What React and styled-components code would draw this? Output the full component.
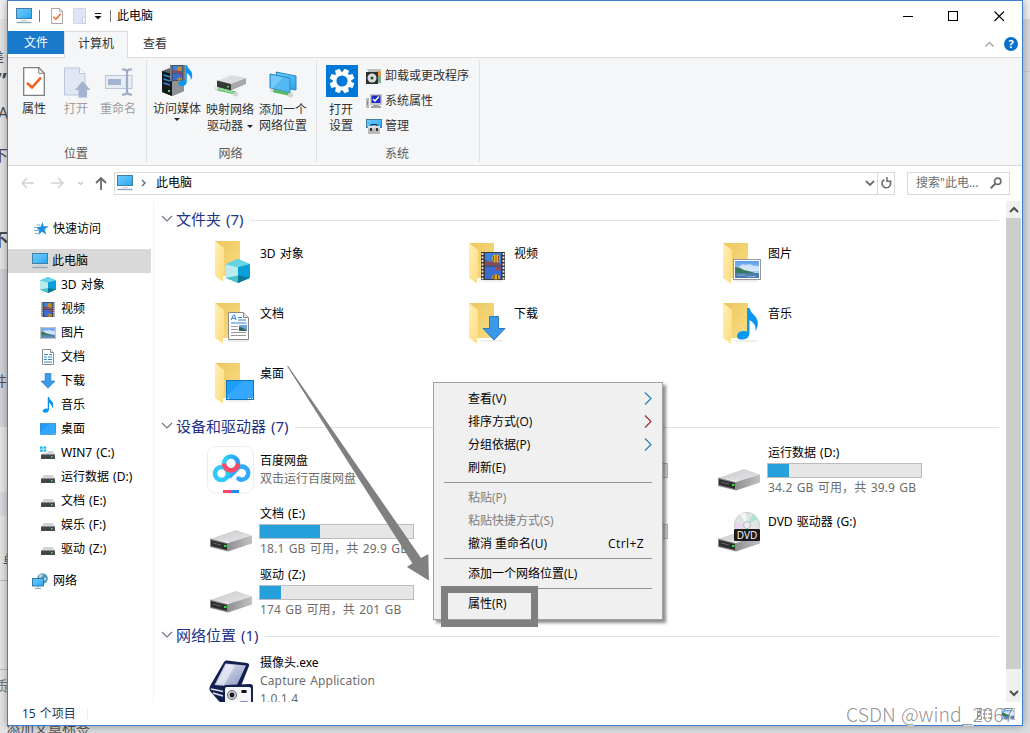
import React from 'react';
import styled, { createGlobalStyle, css } from 'styled-components';

const GlobalStyle = createGlobalStyle`
    * {
        box-sizing: border-box;
    }

    body {
        margin: 0;
        overflow: hidden;
        background: #e2e3e5;
        color: #000;
        font: 12px/16px "Noto Sans", "Noto Sans CJK SC", sans-serif;
        word-spacing: 1px;
    }

    svg {
        display: block;
        flex: none;
    }
`;

/* ---------- icons ---------- */

const Gradients = () => (
    <HiddenSvg width="0" height="0">
        <defs>
            <linearGradient id="screen" x1="0" y1="0" x2="1" y2="1">
                <stop offset="0" stopColor="#6cc9fb" />
                <stop offset=".5" stopColor="#4fbcf8" />
                <stop offset="1" stopColor="#27a3f2" />
            </linearGradient>
            <linearGradient id="folderBack" x1="0" y1="0" x2="1" y2="1">
                <stop offset="0" stopColor="#ecc75f" />
                <stop offset="1" stopColor="#f9dc83" />
            </linearGradient>
            <linearGradient id="folderFront" x1="0" y1="0" x2="1" y2="1">
                <stop offset="0" stopColor="#fff0b4" />
                <stop offset="1" stopColor="#fddb7e" />
            </linearGradient>
            <linearGradient id="driveTop" x1="0" y1="0" x2="1" y2="1">
                <stop offset="0" stopColor="#c9cacb" />
                <stop offset="1" stopColor="#e6e6e8" />
            </linearGradient>
            <linearGradient id="driveSide" x1="0" y1="0" x2="1" y2="0">
                <stop offset="0" stopColor="#8f9092" />
                <stop offset="1" stopColor="#c0c1c3" />
            </linearGradient>
            <linearGradient id="sky" x1="0" y1="0" x2="0" y2="1">
                <stop offset="0" stopColor="#5b9bea" />
                <stop offset="1" stopColor="#d6ebfa" />
            </linearGradient>
            <linearGradient id="pan" x1="0" y1="0" x2="1" y2="0">
                <stop offset="0" stopColor="#2fd2f8" />
                <stop offset="1" stopColor="#2a9cff" />
            </linearGradient>
            <linearGradient id="tablet" x1="0" y1="0" x2="1" y2="1">
                <stop offset="0" stopColor="#e9edf8" />
                <stop offset="1" stopColor="#8894bd" />
            </linearGradient>
        </defs>
    </HiddenSvg>
);

const ComputerIcon = () => (
    <svg width="17" height="16" viewBox="0 0 17 16">
        <rect x=".5" y=".5" width="15" height="10" fill="url(#screen)" stroke="#3f7fa6" />
        <path d="M5 12.500h6" stroke="#c4cdd4" />
        <path d="M.500 14.500h15" stroke="#8aa5bb" strokeWidth="1.400" />
    </svg>
);

const CubeShape = () => (
    <g>
        <path d="M0 3.500L8 0l8 3.500v9L8 16l-8-3.500z" fill="#16a8cf" />
        <path d="M0 3.500L8 0l8 3.500L8 5.500z" fill="#64d5e3" />
        <path d="M0 3.500l8 2v7.500l-8-.500z" fill="#b9ecee" />
        <path d="M8 5.500l8-2v9L8 13z" fill="#0a9fd8" />
        <path d="M0 12.500L8 11v5z" fill="#4cc3c8" />
        <path d="M8 11l8 1.500L8 16z" fill="#087997" />
    </g>
);

const FilmShape = () => (
    <g>
        <rect width="24" height="28" fill="#3b3b3b" />
        <path d="M1.500 1v27M22.500 1v27" stroke="#e8e8e8" strokeWidth="1.800" strokeDasharray="2 1.500" />
        <rect x="4" y="1" width="16" height="12.500" fill="#3f7fe0" />
        <rect x="4" y="14.500" width="16" height="12.500" fill="#3a6cd0" />
        <path d="M4 8l5 2 4-1 7 3v1.500H4z" fill="#8a4a55" />
        <ellipse cx="15" cy="6.500" rx="3.800" ry="4" fill="#e3b824" />
        <path d="M15 2.500v8M12.500 4v5M17.500 4v5" stroke="#8a2d17" strokeWidth=".8" />
        <path d="M14 15.500h6l-2 3h-2z" fill="#c0392b" />
        <ellipse cx="15" cy="25" rx="4" ry="2.500" fill="#e2a91c" />
        <path d="M13 23v4M16.500 23v4" stroke="#53311d" />
    </g>
);

const PhotoShape = () => (
    <g>
        <rect x=".5" y=".5" width="27" height="20" fill="#fff" stroke="#989898" />
        <rect x="2" y="2" width="24" height="17" fill="url(#sky)" />
        <path d="M6 8q3-4 7-2 4-2 8 1 4-1 5 1v4H4z" fill="#eef7fd" opacity=".7" />
        <path d="M2 8q5 0 9 3 5 1 11 3H2z" fill="#3a7a5c" />
        <path d="M2 14h24v5H2z" fill="#4b7dab" />
        <path d="M4 16h9M14 17.500h9" stroke="#a6c6df" strokeWidth=".7" />
    </g>
);

const NoteShape = () => (
    <path d="M11 0h2.500q1 4 4.500 7 5 4.500 3.500 11-.3 3-2 5 1-7-6-11v13q-.5 6-7 6.500Q1 32 1 28q.4-5 7-5 1.600 0 3 .6z" fill="#0898ef" />
);

const DownShape = () => (
    <path d="M7.500.5h9v12h6.500L12 24 1 12.500h6.500z" fill="#3c98e8" stroke="#2a7ac3" />
);

const DocShape = () => (
    <g>
        <path d="M.5.5h15l5 5v22H.5z" fill="#fff" stroke="#888" />
        <path d="M15.500.5v5h5" fill="#e6e6e6" stroke="#888" />
        <path d="M3 8l2.500-5h1L8 8M4 6.300h4" fill="none" stroke="#2184cf" />
        <path d="M10 5.500h4M10 8h8M3 11h15.500" stroke="#2b88cf" strokeWidth="1.100" />
        <path d="M3 14.500h7M3 17.500h7M3 20.500h15M3 23.500h15" stroke="#9b9b9b" />
        <rect x="11" y="13" width="8" height="6" fill="#6ea7dc" />
        <path d="M11 15q4 0 8 4h-8z" fill="#35635d" />
    </g>
);

const SmallDocShape = () => (
    <g>
        <path d="M.5.5h8l3 3v12H.5z" fill="#fff" stroke="#8c8c8c" />
        <path d="M8.500.5v3h3" fill="#eee" stroke="#8c8c8c" />
        <path d="M2 5.500h4M7 5.500h3M2 8h3M6 8h4M2 10.500h3M6 10.500h4M2 13h8" stroke="#2b88cf" />
    </g>
);

const DesktopShape = () => (
    <g>
        <rect x=".5" y=".5" width="27" height="19" fill="#1e9dfb" stroke="#0e76be" />
        <path d="M1 15L17 1h10v18H1z" fill="#45b1ff" opacity=".5" />
        <path d="M2 18.500h1M22 18.500h1M24 18.500h1M26 18.500h1" stroke="#fff" />
    </g>
);

const shapes = {
    cube: { Shape: CubeShape, w: 16, h: 16, small: [16, 16], big: [24, 24, 11, 18] },
    film: { Shape: FilmShape, w: 24, h: 28, small: [14, 15], big: [24, 28, 12, 9] },
    photo: { Shape: PhotoShape, w: 28, h: 21, small: [16, 12], big: [28, 21, 10, 16] },
    doc: { Shape: DocShape, w: 21, h: 28, small: [12, 16], big: [21, 28, 13, 9] },
    down: { Shape: DownShape, w: 24, h: 25, small: [16, 16], big: [24, 25, 13, 13] },
    note: { Shape: NoteShape, w: 23, h: 32, small: [12, 16], big: [23, 32, 13, 5] },
    desk: { Shape: DesktopShape, w: 28, h: 20, small: [16, 12], big: [28, 20, 11, 17] },
};

const SmallIcon = ({ kind }) => {
    const { Shape, w, h, small } = shapes[kind];
    return (
        <svg width={small[0]} height={small[1]} viewBox={`0 0 ${w} ${h}`}>
            <Shape />
        </svg>
    );
};

const FolderIcon = ({ kind }) => {
    const { Shape, w, h, big } = shapes[kind];
    return (
        <svg width="40" height="42" viewBox="0 0 40 42">
            <path d="M9 37h25v2H14z" fill="#eee" />
            <path d="M0 0h25v35H8z" fill="url(#folderBack)" />
            <path d="M0 0l9 7v25l-1 2v6.500L0 35z" fill="url(#folderFront)" />
            <svg x={big[2]} y={big[3]} width={big[0]} height={big[1]} viewBox={`0 0 ${w} ${h}`}>
                <Shape />
            </svg>
        </svg>
    );
};

const SmallDrive = ({ win }) => (
    <svg width="16" height="14" viewBox="0 0 16 14">
        <path d="M4 5h9l2 4H1z" fill="#d3d4d6" />
        <rect x="1" y="8.500" width="14" height="4.500" rx=".5" fill="#46474a" />
        <rect x="11" y="10" width="1.600" height="1.400" fill="#44e05a" />
        {win && (
            <g>
                <path d="M0 0h7v7H0z" fill="#fff" />
                <path d="M0 .5h2.700v2.300H0zM3.500.5h2.700v2.300H3.500zM0 3.500h2.700v2.300H0zM3.500 3.500h2.700v2.300H3.500z" fill="#18b7f0" />
            </g>
        )}
    </svg>
);

const DriveShape = () => (
    <g>
        <path d="M0 9L26 0l16 5.500-20 7z" fill="url(#driveTop)" />
        <path d="M18 13L42 5.500v8L18 21.500z" fill="url(#driveSide)" />
        <path d="M0 8.500l18 4.500v8.500L0 17z" fill="#8c8d8e" />
        <path d="M1 10l16 4v6L1 16z" fill="#2d2e30" />
        <path d="M3 13l8 2" stroke="#666" />
        <rect x="14" y="15" width="2.500" height="2" fill="#2de33b" />
    </g>
);

const DriveIcon = () => (
    <svg width="42" height="22" viewBox="0 0 42 22">
        <DriveShape />
    </svg>
);

const DvdIcon = () => (
    <svg width="42" height="40" viewBox="0 0 42 40">
        <g transform="translate(0 18)">
            <DriveShape />
        </g>
        <circle cx="29" cy="13" r="12.500" fill="#dfe5e5" stroke="#b9bdbe" strokeWidth=".8" />
        <path d="M29 13L35 2l4 5z" fill="#a8e3d6" />
        <path d="M29 13L17 10l1 8z" fill="#ecd5ee" />
        <path d="M29 13L22 2l6-1z" fill="#f6f6f6" />
        <circle cx="29" cy="13" r="3.500" fill="#f4f4f4" stroke="#b5b5b5" />
        <circle cx="29" cy="13" r="1.500" fill="#fff" stroke="#c0c0c0" strokeWidth=".5" />
        <rect x="16" y="17" width="26" height="12" rx="1" fill="#1b1b1b" />
        <text x="29" y="26.600" textAnchor="middle" fontFamily="Open Sans, sans-serif" fontSize="10" fill="#fff">DVD</text>
    </svg>
);

const BaiduIcon = () => (
    <svg width="47" height="48" viewBox="0 0 47 48">
        <rect x=".5" y=".5" width="46" height="46.500" rx="8" fill="#fff" stroke="#ededed" />
        <g fill="none" strokeWidth="4.600">
            <path d="M31.500 32.700a6.500 6.500 0 1 0-2.200-9.200L23 30" stroke="#33a9fc" strokeLinecap="round" />
            <circle cx="14.500" cy="27.500" r="6.500" stroke="#2fcaf8" />
            <path d="M19.500 31.500l3.500-1.500" stroke="#2fc0fa" strokeWidth="3" />
            <circle cx="24" cy="17.500" r="7" stroke="url(#pan)" />
            <path d="M17 17.500a7 7 0 0 0 14 0" stroke="#fb4a66" />
        </g>
        <rect x="16" y="44" width="8" height="3" fill="#f7456c" />
        <rect x="24" y="44" width="8" height="3" fill="#2088f2" />
    </svg>
);

const CaptureIcon = () => (
    <svg width="45" height="44" viewBox="0 0 45 44">
        <path d="M1 26L15 2q1-2 3-1.500l20 2.500q3 .5 2 3l-10 25q-1 3-4 3L14 43q-3 0-6-4L1 31q-1-2 0-5z" fill="#13204f" />
        <path d="M16.500 3.500L37 5.500 27 27 5.500 25z" fill="url(#tablet)" />
        <path d="M18 4.500l8 1L15 25l-8-.7z" fill="#fff" opacity=".5" />
        <path d="M2 29l15 3M4 33l10 3" stroke="#dde2f0" strokeWidth="1.500" />
        <path d="M14 28q0-3 3-3l24-1q3 0 3 3v18H14z" fill="#15224f" />
        <rect x="16" y="27" width="26" height="17" rx="2" fill="#f5f6fa" />
        <circle cx="23" cy="35" r="4.500" fill="#d0d2d8" stroke="#666" />
        <circle cx="23" cy="35" r="2.400" fill="#17181c" />
        <rect x="32.500" y="30" width="5" height="3" fill="#111" />
        <rect x="31" y="41" width="8" height="3" rx="1" fill="#7b93c2" />
    </svg>
);

const StarIcon = () => (
    <svg width="15" height="14" viewBox="0 0 15 14">
        <path d="M8.500 0l1.200 4.300 5-.1-4 3 1.500 5.300-4.200-2.800L4.300 13l1-4.800L2 5.300l4.600-.6z" fill="#1f90d8" />
        <path d="M0 5.500h4M0 8.500h5M1 11.500h3M3 3h3" stroke="#5eb2e6" />
    </svg>
);

const NetworkIcon = () => (
    <svg width="16" height="16" viewBox="0 0 16 16">
        <circle cx="10.500" cy="5.500" r="5.300" fill="#5795b8" />
        <path d="M7 2.500q2-2 4-1l-1.500 3-2.500.5zM13 4l1.500 2-1.500 2-1.500-2z" fill="#b9d9e6" />
        <rect x=".5" y="5.500" width="11" height="7.500" fill="url(#screen)" stroke="#3579a5" />
        <path d="M3 15.500h6M6 13v2" stroke="#91a6b4" />
    </svg>
);

const CheckDoc = ({ w = 22, h = 29 }) => (
    <svg width={w} height={h} viewBox="0 0 22 29">
        <path d="M.7.7h15l5.600 5.600v22H.7z" fill="#fff" stroke="#7e7e7e" strokeWidth="1.300" />
        <path d="M15.700.7v5.600h5.600" fill="none" stroke="#7e7e7e" />
        <path d="M4 16l5 4.500L18 10.500" fill="none" stroke="#f0611c" strokeWidth="2.600" />
    </svg>
);

const OpenIcon = () => (
    <svg width="26" height="31" viewBox="1 0 26 31">
        <path d="M1.500 1h15L22 6.500V28H1.500z" fill="#dfe7f3" stroke="#b7c4d9" />
        <path d="M16.500 1v5.500H22" fill="#f7f9fc" stroke="#b7c4d9" />
        <path d="M19.500 14L27.500 23H24v7.500h-8.500V23H12z" fill="#9aadcb" />
    </svg>
);

const RenameIcon = () => (
    <svg width="28" height="28" viewBox="0 0 28 28">
        <rect x=".5" y="7.500" width="26.500" height="13" fill="#e6ecf5" stroke="#b2c0d7" />
        <rect x="3" y="11" width="13" height="6" fill="#9aadcb" />
        <path d="M17 1.500q4-.5 5 2 1-2.500 5-2M17 26.500q4 .5 5-2 1 2.500 5 2M22 3v22" fill="none" stroke="#94a6c3" strokeWidth="2.200" />
    </svg>
);

const MediaIcon = () => (
    <svg width="32" height="32" viewBox="0 0 32 32">
        <path d="M1 6l8-3 14 4v19L11 31 1 27z" fill="#5d6065" />
        <path d="M1 6l10 3v22L1 27z" fill="#15181c" />
        <path d="M11 9l12-3v20l-12 5z" fill="#8f9297" />
        <path d="M2.500 10l6.500 2M2.500 14l6.500 2M2.500 18l6.500 2" stroke="#2d8ddb" strokeWidth="1.400" />
        <rect x="7" y="25" width="2" height="2" fill="#4be06a" />
        <svg x="9" y="0" width="15" height="16" viewBox="0 0 24 28" preserveAspectRatio="none">
            <FilmShape />
        </svg>
        <svg x="17" y="0" width="15" height="22" viewBox="0 0 23 33" preserveAspectRatio="none">
            <NoteShape />
        </svg>
    </svg>
);

const NetDriveIcon = () => (
    <svg width="32" height="22" viewBox="0 0 32 22">
        <path d="M3 6l15-6 14 3-15 6z" fill="#dcdddf" />
        <path d="M17 9l15-6v6l-15 6.500z" fill="#a6a8ab" />
        <path d="M3 5.500L17 9v6.500L3 12z" fill="#37383a" />
        <rect x="13" y="11" width="2" height="1.500" fill="#35e043" />
        <path d="M3 12.500q-2 1 0 3l18 4q3-1 1-3l-5-1z" fill="#4db75c" />
        <path d="M5 14l14 3.500" stroke="#9ce3a3" strokeWidth="1.500" />
        <circle cx="2.500" cy="13.500" r="2" fill="#dcdcdc" />
        <circle cx="21.500" cy="19" r="2.500" fill="#d0d2d3" />
    </svg>
);

const NetPlaceIcon = () => (
    <svg width="28" height="27" viewBox="0 0 28 27">
        <path d="M7 1l20 4v14L10 16z" fill="url(#screen)" stroke="#2a84bd" />
        <path d="M1 3l20 4v15L1 17z" fill="#52b9f4" stroke="#2a84bd" />
        <path d="M2 4l12 2.500L4 17H2z" fill="#8bd3fa" opacity=".6" />
        <path d="M3 18l18 4v3L3 21z" fill="#54bc5f" />
        <circle cx="2.500" cy="19.500" r="2" fill="#dedede" />
        <circle cx="21.500" cy="24" r="2.500" fill="#cfd1d2" />
    </svg>
);

const GearIcon = () => {
    const teeth = [0, 45, 90, 135, 180, 225, 270, 315];
    return (
        <svg width="32" height="32" viewBox="0 0 32 32">
            <rect width="32" height="32" fill="#0078d7" />
            {teeth.map(a => (
                <path key={a} d="M13.600 3.600h4.800l.8 5h-6.400z" fill="#fff" transform={`rotate(${a + 22.5} 16 16)`} />
            ))}
            <circle cx="16" cy="16" r="7.400" fill="none" stroke="#fff" strokeWidth="3.600" />
        </svg>
    );
};

const UninstallIcon = () => (
    <svg width="16" height="16" viewBox="0 0 16 16">
        <path d="M1 1h14l-2 4H3z" fill="#bfc1c0" />
        <path d="M9 4h6v11H9z" fill="#7fae8c" />
        <path d="M11 3h4v5h-4z" fill="#e89b49" />
        <rect x="0" y="4" width="12" height="12" fill="#2c2d2e" />
        <circle cx="6" cy="10" r="4.500" fill="#d9dcdc" />
        <circle cx="6" cy="10" r="1.500" fill="#3a3b3c" />
    </svg>
);

const SystemIcon = () => (
    <svg width="16" height="15" viewBox="0 0 16 15">
        <rect x="4" y="0" width="12" height="11" fill="#c8c8c8" />
        <rect x="5.500" y="1.500" width="9" height="7.500" fill="#1b2ac4" />
        <path d="M7 5l2 2 4-4.500" fill="none" stroke="#fff" strokeWidth="1.500" />
        <path d="M7 11h6v1h2v2H5v-2h2z" fill="#a2a2a2" />
        <rect x="0" y="4" width="3" height="10" fill="#b6bab8" />
        <rect x="1" y="7" width="1" height="4" fill="#58a55e" />
    </svg>
);

const ManageIcon = () => (
    <svg width="16" height="15" viewBox="0 0 16 15">
        <rect x=".5" y=".5" width="15" height="8" fill="url(#screen)" stroke="#3f7fa6" />
        <path d="M5 7V5.500h6V7" fill="none" stroke="#333" />
        <rect x="2" y="7" width="12" height="8" fill="#b9b9bb" />
        <path d="M2 7h12v2.500H2z" fill="#dedee0" />
        <rect x="4" y="9" width="2" height="3" fill="#333" />
        <rect x="10" y="9" width="2" height="3" fill="#333" />
    </svg>
);

const Chevron = ({ d = 'M1 1l4 4 4-4', w = 10, h = 6, color = '#777', weight = 1.2 }) => (
    <svg width={w} height={h} viewBox={`0 0 ${w} ${h}`}>
        <path d={d} fill="none" stroke={color} strokeWidth={weight} />
    </svg>
);

const NavArrow = ({ back, color = '#d2d2d2' }) => (
    <svg width="13" height="12" viewBox="0 0 13 12">
        <path d={back ? 'M6 1L1 6l5 5M1 6h12' : 'M7 1l5 5-5 5M12 6H0'} fill="none" stroke={color} strokeWidth="1.500" />
    </svg>
);

/* ---------- data ---------- */

const tree = [
    { icon: <SmallIcon kind="cube" />, text: '3D 对象' },
    { icon: <SmallIcon kind="film" />, text: '视频' },
    { icon: <SmallIcon kind="photo" />, text: '图片' },
    { icon: <svg width="12" height="16" viewBox="0 0 12 16"><SmallDocShape /></svg>, text: '文档' },
    { icon: <SmallIcon kind="down" />, text: '下载' },
    { icon: <SmallIcon kind="note" />, text: '音乐' },
    { icon: <SmallIcon kind="desk" />, text: '桌面' },
    { icon: <SmallDrive win />, text: 'WIN7 (C:)' },
    { icon: <SmallDrive />, text: '运行数据 (D:)' },
    { icon: <SmallDrive />, text: '文档 (E:)' },
    { icon: <SmallDrive />, text: '娱乐 (F:)' },
    { icon: <SmallDrive />, text: '驱动 (Z:)' },
];

const folders = [
    { kind: 'cube', text: '3D 对象', top: 6 },
    { kind: 'film', text: '视频' },
    { kind: 'photo', text: '图片' },
    { kind: 'doc', text: '文档' },
    { kind: 'down', text: '下载' },
    { kind: 'note', text: '音乐' },
    { kind: 'desk', text: '桌面' },
];

const menu = [
    { text: '查看(V)', sub: '#2a7fb5' },
    { text: '排序方式(O)', sub: '#a33030' },
    { text: '分组依据(P)', sub: '#2a7fb5' },
    { text: '刷新(E)' },
    { line: true },
    { text: '粘贴(P)', off: true },
    { text: '粘贴快捷方式(S)', off: true },
    { text: '撤消 重命名(U)', hint: 'Ctrl+Z' },
    { line: true },
    { text: '添加一个网络位置(L)' },
    { line: true },
    { text: '属性(R)' },
];

const Drive = ({ name, info, used }) => (
    <Item>
        <IconCell top={27}>{name && <DriveIcon />}</IconCell>
        <ItemText top={3}>
            <Name>{name}</Name>
            <Bar>
                <BarFill style={{ width: `${used}%` }} />
            </Bar>
            <Sub wide>{info}</Sub>
        </ItemText>
    </Item>
);

const Group = ({ title, gap, children }) => (
    <section>
        <GroupHead gap={gap}>
            <Chevron w={12} h={7} d="M1 1l5 5 5-5" color="#6b7480" weight={1.1} />
            <GroupTitle>{title}</GroupTitle>
            <GroupLine />
        </GroupHead>
        {children}
    </section>
);

const App = () => (
    <Page>
        <GlobalStyle />
        <Gradients />
        <BackStrip />
        <Behind x={-9} y={49}>差</Behind>
        <Behind x={-3} y={71} size={22} bold>”</Behind>
        <Behind x={-2} y={105} size={16}>A</Behind>
        <Behind x={-7} y={147} size={15}>下</Behind>
        <Behind x={-9} y={232} size={17} bold>不</Behind>
        <Behind x={-7} y={373} size={14}>件</Behind>
        <Behind x={3} y={552} size={13}>单</Behind>
        <Behind x={-6} y={678} size={14} color="#777">质</Behind>
        <Behind x={6} y={720} size={14} color="#555">添加文章标签</Behind>

        <Window>
            <TitleBar>
                <ComputerIcon />
                <Tick left={6} />
                <Spacer w={11} />
                <CheckDoc w={12} h={16} />
                <Spacer w={10} />
                <svg width="13" height="16" viewBox="0 0 13 16">
                    <path d="M.500.500h12V15.500H.500z" fill="#dde6f2" stroke="#ccd8e8" />
                    <path d="M9.500 9h3v6.500h-3z" fill="#f0f4fa" stroke="#c5d2e5" />
                </svg>
                <Spacer w={8} />
                <svg width="8" height="8" viewBox="0 0 8 8">
                    <path d="M1 1.500h6" stroke="#111" />
                    <path d="M.500 4h7L4 7.500z" fill="#111" />
                </svg>
                <Tick left={8} />
                <WindowTitle>此电脑</WindowTitle>
                <WindowButtons>
                    <svg width="10" height="11" viewBox="0 0 10 11">
                        <path d="M0 5.500h10" stroke="#000" />
                    </svg>
                    <svg width="11" height="11" viewBox="0 0 11 11">
                        <rect x=".5" y=".5" width="9" height="9" fill="none" stroke="#000" />
                    </svg>
                    <svg width="11" height="11" viewBox="0 0 11 11">
                        <path d="M.500.500l9.500 9.500M10 .500L.500 10" stroke="#000" strokeWidth="1.100" />
                    </svg>
                </WindowButtons>
            </TitleBar>

            <Tabs>
                <FileTab>文件</FileTab>
                <ActiveTab>计算机</ActiveTab>
                <Tab>查看</Tab>
                <TabTools>
                    <Chevron w={9} h={6} d="M.500 5.500l4-4 4 4" color="#a5a5a5" weight={1.4} />
                    <Help>?</Help>
                </TabTools>
            </Tabs>

            <Ribbon>
                <RibbonGroup width={139}>
                    <Tools pad={5}>
                        <Tool width={42} top={7}><CheckDoc />属性</Tool>
                        <Tool width={42} top={7} off nudge={2}><OpenIcon />打开</Tool>
                        <Tool width={42} top={8} off nudge={2}><RenameIcon />重命名</Tool>
                    </Tools>
                    <RibbonLabel>位置</RibbonLabel>
                </RibbonGroup>
                <RibbonGroup width={170}>
                    <Tools pad={4}>
                        <Tool width={52} top={5}>
                            <MediaIcon />
                            访问媒体
                            <Caret />
                        </Tool>
                        <Tool width={54} top={15} two>
                            <NetDriveIcon />
                            映射网络
                            <span>驱动器 <Caret inline /></span>
                        </Tool>
                        <Tool width={52} top={11} two>
                            <NetPlaceIcon />
                            添加一个
                            <span>网络位置</span>
                        </Tool>
                    </Tools>
                    <RibbonLabel>网络</RibbonLabel>
                </RibbonGroup>
                <RibbonGroup width={163}>
                    <Tools pad={7}>
                        <Tool width={34} top={5} two nudge={2}>
                            <GearIcon />
                            打开
                            <span>设置</span>
                        </Tool>
                        <ToolList>
                            <ToolRow><UninstallIcon />卸载或更改程序</ToolRow>
                            <ToolRow><SystemIcon />系统属性</ToolRow>
                            <ToolRow><ManageIcon />管理</ToolRow>
                        </ToolList>
                    </Tools>
                    <RibbonLabel>系统</RibbonLabel>
                </RibbonGroup>
            </Ribbon>

            <AddressRow>
                <NavButtons>
                    <NavArrow back />
                    <Spacer w={17} />
                    <NavArrow />
                    <Spacer w={13} />
                    <Chevron w={7} h={5} d="M1 1l2.500 2.500L6 1" color="#c4c4c4" />
                    <Spacer w={11} />
                    <svg width="12" height="13" viewBox="0 0 12 13">
                        <path d="M1 6l5-5 5 5M6 1v12" fill="none" stroke="#6a6a6a" strokeWidth="1.800" />
                    </svg>
                </NavButtons>
                <Address>
                    <ComputerIcon />
                    <Spacer w={7} />
                    <Chevron w={5} h={8} d="M1 1l3 3-3 3" color="#666" weight={1.4} />
                    <Spacer w={10} />
                    此电脑
                    <Push />
                    <Chevron w={10} h={7} d="M1 1l4 4 4-4" color="#6d6d6d" weight={1.8} />
                    <Refresh>
                        <svg width="11" height="12" viewBox="0 0 11 12">
                            <path d="M3.300 2.700a4.300 4.300 0 1 0 5.600 1.400" fill="none" stroke="#6d6d6d" strokeWidth="1.600" />
                            <path d="M6 0v4.200h4.500" fill="none" stroke="#6d6d6d" strokeWidth="1.500" />
                        </svg>
                    </Refresh>
                </Address>
                <Search>
                    搜索"此电...
                    <svg width="12" height="12" viewBox="0 0 12 12">
                        <circle cx="7.700" cy="4.300" r="3.200" fill="none" stroke="#6d6d6d" strokeWidth="1.600" />
                        <path d="M5.200 6.700L.700 11.200" stroke="#6d6d6d" strokeWidth="2" />
                    </svg>
                </Search>
            </AddressRow>

            <Body>
                <Sidebar>
                    <TreeRow pad={26} space={4}><StarIcon /><span>快速访问</span></TreeRow>
                    <TreeRow pad={24} gap={8} space={3} selected><ComputerIcon /><span>此电脑</span></TreeRow>
                    {tree.map(row => (
                        <TreeRow key={row.text} pad={32}>
                            <TreeIcon>{row.icon}</TreeIcon>
                            {row.text}
                        </TreeRow>
                    ))}
                    <TreeRow pad={24} gap={8}><NetworkIcon /><span>网络</span></TreeRow>
                </Sidebar>

                <Content>
                    <Group title="文件夹 (7)" gap={5}>
                        <Grid row={60}>
                            {folders.map(f => (
                                <Item key={f.text}>
                                    <IconCell top={f.top || 8} left={7}><FolderIcon kind={f.kind} /></IconCell>
                                    <ItemText top={11}><Name>{f.text}</Name></ItemText>
                                </Item>
                            ))}
                        </Grid>
                    </Group>
                    <Group title="设备和驱动器 (7)" gap={-3}>
                        <Grid row={61}>
                            <Item>
                                <IconCell top={4} left={-1}><BaiduIcon /></IconCell>
                                <ItemText top={11}>
                                    <Name>百度网盘</Name>
                                    <Sub>双击运行百度网盘</Sub>
                                </ItemText>
                            </Item>
                            <Drive used={0} />
                            <Drive name="运行数据 (D:)" used={14} info="34.2 GB 可用，共 39.9 GB" />
                            <Drive name="文档 (E:)" used={39.5} info="18.1 GB 可用，共 29.9 GB" />
                            <Drive used={0} />
                            <Item>
                                <IconCell top={9}><DvdIcon /></IconCell>
                                <ItemText top={11}><Name>DVD 驱动器 (G:)</Name></ItemText>
                            </Item>
                            <Drive name="驱动 (Z:)" used={13.5} info="174 GB 可用，共 201 GB" />
                        </Grid>
                    </Group>
                    <Group title="网络位置 (1)" gap={-4}>
                        <Grid row={60}>
                            <Item>
                                <IconCell top={9} left={1}><CaptureIcon /></IconCell>
                                <ItemText top={4}>
                                    <Name>摄像头.exe</Name>
                                    <Sub wide>Capture Application</Sub>
                                    <Sub wide>1.0.1.4</Sub>
                                </ItemText>
                            </Item>
                        </Grid>
                    </Group>
                </Content>

                <Scrollbar>
                    <ScrollEnd><Chevron w={10} h={7} d="M1 6l4-4 4 4" color="#505050" weight={2} /></ScrollEnd>
                    <Thumb />
                    <ScrollEnd><Chevron w={10} h={7} d="M1 1l4 4 4-4" color="#505050" weight={2} /></ScrollEnd>
                </Scrollbar>
            </Body>

            <StatusBar>
                15 个项目
                <StatusTick />
                <Push />
                <svg width="16" height="12" viewBox="0 0 16 12">
                    <path d="M.500.500h4v3h-4zM.500 4.500h4v3h-4zM.500 8.500h4v3h-4z" fill="#fff" stroke="#888" />
                    <path d="M6 2h4M11 2h4M6 6h4M11 6h4M6 10h4M11 10h4" stroke="#666" />
                </svg>
                <Spacer w={8} />
                <svg width="14" height="12" viewBox="0 0 28 21" preserveAspectRatio="none"><PhotoShape /></svg>
            </StatusBar>
        </Window>

        <Menu>
            {menu.map((m, i) => m.line ? <MenuLine key={i} /> : (
                <MenuItem key={i} off={m.off}>
                    <span>{m.text}</span>
                    {m.hint && <Hint>{m.hint}</Hint>}
                    {m.sub && <Chevron w={8} h={13} d="M1 .500l6 6-6 6" color={m.sub} weight={1.2} />}
                </MenuItem>
            ))}
        </Menu>
        <Marker />
        <Pointer width="144" height="216" viewBox="286 365 144 216">
            <path d="M287 366l1.200 0L421 558l7.300-4 .6 26.500-22-13.500 5.500-3.800z" fill="#808080" />
        </Pointer>
        <Watermark>CSDN @wind_2067</Watermark>
    </Page>
);

export default App;

/* ---------- page behind the window ---------- */

const HiddenSvg = styled.svg`
    position: absolute;
`;

const Page = styled.div`
    position: relative;
    width: 1030px;
    height: 733px;
    overflow: hidden;
    background: linear-gradient(#f2f2f2 19px, #d9dadc 19px, #d9dadc 71px, #c9cacc 71px, #c9cacc 72px, #dcdddf 72px, #dcdddf);
`;

const BackStrip = styled.div`
    position: absolute;
    left: 0;
    top: 0;
    width: 8px;
    height: 733px;
    background: linear-gradient(
        #f2f2f2 19px, #e6e6e8 19px, #e6e6e8 269px, #d3d5da 269px, #d3d5da 427px,
        #e8e8e9 427px, #e8e8e9 492px, #d9dbe0 492px, #d9dbe0 516px, #e6e6e7 516px,
        #e6e6e7 580px, #bbb 580px, #bbb 581px, #e6e6e7 581px, #e6e6e7 669px,
        #bbb 669px, #bbb 670px, #e6e6e7 670px
    );
`;

const Behind = styled.div`
    position: absolute;
    left: ${p => p.x}px;
    top: ${p => p.y}px;
    font-size: ${p => p.size || 13}px;
    font-weight: ${p => (p.bold ? 700 : 400)};
    color: ${p => p.color || '#4d4d52'};
    white-space: nowrap;
`;

/* ---------- window ---------- */

const Window = styled.div`
    position: relative;
    display: flex;
    flex-direction: column;
    width: 1016px;
    height: 726px;
    margin-left: 7px;
    background: #fff;
    border: 1px solid #3c80cc;
    box-shadow: 0 0 9px rgba(0, 0, 0, 0.35);
`;

const Spacer = styled.div`
    flex: none;
    width: ${p => p.w}px;
`;

const Push = styled.div`
    flex: 1;
`;

const TitleBar = styled.div`
    display: flex;
    align-items: center;
    height: 30px;
    padding-left: 8px;
`;

const Tick = styled.div`
    width: 1px;
    height: 12px;
    margin-left: ${p => p.left}px;
    background: #777;
`;

const WindowTitle = styled.div`
    margin-left: 6px;
    flex: 1;
`;

const WindowButtons = styled.div`
    display: flex;
    gap: 35px;
    padding-right: 17px;
`;

const Tabs = styled.div`
    display: flex;
    height: 27px;
    border-bottom: 1px solid #dadbdc;
`;

const Tab = styled.div`
    width: 54px;
    text-align: center;
    line-height: 25px;
    color: #333;
`;

const FileTab = styled(Tab)`
    width: 56px;
    height: 23px;
    line-height: 24px;
    color: #fff;
    background: #1979ca;
`;

const ActiveTab = styled(Tab)`
    width: 64px;
    height: 27px;
    border: 1px solid #dadbdc;
    border-bottom: 0;
    background: #f5f6f7;
    line-height: 23px;
`;

const TabTools = styled.div`
    display: flex;
    align-items: center;
    gap: 10px;
    margin-left: auto;
    padding-right: 4px;
`;

const Help = styled.div`
    width: 14px;
    height: 14px;
    border-radius: 50%;
    background: #0b6fca;
    color: #fff;
    font: 700 11px/14px "Open Sans", sans-serif;
    text-align: center;
`;

const Ribbon = styled.div`
    display: flex;
    height: 108px;
    padding-top: 2px;
    background: #f5f6f7;
    border-bottom: 1px solid #dadbdc;
`;

const RibbonGroup = styled.div`
    display: flex;
    flex-direction: column;
    justify-content: space-between;
    width: ${p => p.width}px;
    height: 102px;
    border-right: 1px solid #e1e2e3;
`;

const Tools = styled.div`
    display: flex;
    height: 84px;
    padding-left: ${p => p.pad}px;
`;

const Tool = styled.div`
    display: flex;
    flex-direction: column;
    align-items: center;
    position: relative;
    width: ${p => p.width}px;
    height: 84px;
    padding-bottom: ${p => (p.two ? 10 : 27)}px;
    color: ${p => (p.off ? '#9d9d9d' : '#333')};
    white-space: nowrap;

    svg {
        margin-top: ${p => p.top}px;
        margin-bottom: auto;
        margin-left: ${p => p.nudge || 0}px;
        ${p => p.off && css`opacity: 0.9;`}
    }
`;

const Caret = styled.i`
    ${p => (p.inline ? css`
        display: inline-block;
        vertical-align: middle;
    ` : css`
        position: absolute;
        top: 58px;
    `)}
    border: 3px solid transparent;
    border-top-color: #222;
    border-bottom: 0;
`;

const RibbonLabel = styled.div`
    height: 16px;
    padding-right: 2px;
    text-align: center;
    color: #5a5a5a;
`;

const ToolList = styled.div`
    display: flex;
    flex-direction: column;
    gap: 9px;
    padding: 8px 0 0 8px;
`;

const ToolRow = styled.div`
    display: flex;
    align-items: center;
    gap: 3px;
    height: 16px;
    color: #333;
    white-space: nowrap;
`;

const AddressRow = styled.div`
    display: flex;
    align-items: center;
    flex: none;
    height: 34px;
    padding-right: 12px;
`;

const NavButtons = styled.div`
    display: flex;
    align-items: center;
    width: 106px;
    padding-left: 13px;
`;

const Address = styled.div`
    display: flex;
    align-items: center;
    flex: 1;
    height: 23px;
    padding-left: 2px;
    border: 1px solid #d9d9d9;
`;

const Refresh = styled.div`
    display: flex;
    align-items: center;
    justify-content: center;
    width: 17px;
    height: 21px;
    margin-left: 2px;
    border-left: 1px solid #d9d9d9;
`;

const Search = styled.div`
    display: flex;
    align-items: center;
    justify-content: space-between;
    width: 103px;
    height: 23px;
    margin-left: 12px;
    padding: 0 7px 0 8px;
    border: 1px solid #d9d9d9;
    color: #6d6d6d;
`;

const Body = styled.div`
    display: flex;
    height: 502px;
    overflow: hidden;
`;

const Sidebar = styled.div`
    width: 146px;
    margin-top: 1px;
    padding: 16px 2px 0 0;
    border-right: 1px solid #f3f3f3;
`;

const TreeRow = styled.div`
    display: flex;
    align-items: center;
    gap: ${p => p.space || 5}px;
    height: 24px;
    margin-top: ${p => p.gap || 0}px;
    padding-left: ${p => p.pad}px;
    background: ${p => (p.selected ? '#d9d9d9' : 'transparent')};
    white-space: nowrap;
`;

const TreeIcon = styled.div`
    display: flex;
    justify-content: center;
    width: 16px;
`;

const Content = styled.main`
    flex: 1;
    padding-left: 7px;
    overflow: hidden;
`;

const GroupHead = styled.div`
    display: flex;
    align-items: center;
    height: 27px;
    margin-top: ${p => p.gap}px;
    margin-bottom: 3px;
    padding-right: 7px;
`;

const GroupTitle = styled.h2`
    margin: 0 7px 0 3px;
    font-size: 15px;
    font-weight: 400;
    line-height: 20px;
    color: #1e3287;
`;

const GroupLine = styled.div`
    flex: 1;
    height: 1px;
    margin-top: 4px;
    background: #e2e2e2;
`;

const Grid = styled.div`
    display: grid;
    grid-template-columns: repeat(3, 254px);
    grid-auto-rows: ${p => p.row}px;
    padding-left: 47px;
`;

const Item = styled.div`
    display: flex;
`;

const IconCell = styled.div`
    width: 50px;
    padding-top: ${p => p.top}px;

    svg {
        margin-left: ${p => (p.left === undefined ? 2 : p.left)}px;
    }

    svg svg {
        margin: 0;
    }
`;

const ItemText = styled.div`
    width: 156px;
    padding-top: ${p => p.top}px;
    padding-left: 2px;
    white-space: nowrap;
`;

const Name = styled.div`
    height: 17px;
`;

const Sub = styled.div`
    height: 18px;
    line-height: 18px;
    letter-spacing: ${p => (p.wide ? 0.15 : 0)}px;
    color: #6d6d6d;
`;

const Bar = styled.div`
    width: 155px;
    height: 15px;
    margin: 1px 0 1px -1px;
    background: #e6e6e6;
    border: 1px solid #bcbcbc;
`;

const BarFill = styled.div`
    height: 13px;
    background: #26a0da;
`;

const Scrollbar = styled.div`
    display: flex;
    flex-direction: column;
    width: 15px;
    margin-top: 1px;
    margin-right: 1px;
    background: #f0f0f0;
`;

const ScrollEnd = styled.div`
    display: flex;
    align-items: center;
    justify-content: center;
    height: 17px;
`;

const Thumb = styled.div`
    height: 451px;
    margin-bottom: 16px;
    background: #cdcdcd;
`;

const StatusBar = styled.div`
    display: flex;
    align-items: center;
    height: 23px;
    padding: 0 7px 0 14px;
    color: #1e395b;
`;

const StatusTick = styled.div`
    width: 1px;
    height: 11px;
    margin-left: 11px;
    background: #ececec;
`;

/* ---------- context menu and marks above the window ---------- */

const Menu = styled.div`
    position: absolute;
    left: 433px;
    top: 382px;
    width: 230px;
    height: 238px;
    padding: 4px 10px;
    background: #f0f0f0;
    border: 1px solid #a0a0a0;
    box-shadow: 3px 3px 3px rgba(0, 0, 0, 0.45);
    word-spacing: 0;
`;

const MenuItem = styled.div`
    display: flex;
    align-items: center;
    justify-content: space-between;
    height: 23px;
    padding: 0 0 0 24px;
    color: ${p => (p.off ? '#7c7c7c' : '#000')};
    font-family: "Open Sans", "Noto Sans CJK SC", sans-serif;
`;

const Hint = styled.span`
    padding-right: 8px;
    letter-spacing: 0.4px;
`;

const MenuLine = styled.div`
    height: 1px;
    margin: 3px 0;
    background: #919191;
`;

const Marker = styled.div`
    position: absolute;
    left: 441px;
    top: 586px;
    width: 97px;
    height: 41px;
    border: 7px solid #808080;
`;

const Pointer = styled.svg`
    position: absolute;
    left: 286px;
    top: 365px;
`;

const Watermark = styled.div`
    position: absolute;
    left: 846px;
    top: 703px;
    font: 300 19.4px/22px "Noto Sans CJK SC", sans-serif;
    color: rgba(135, 135, 135, 0.9);
    text-shadow: 1px 1px 0 rgba(255, 255, 255, 0.8);
    white-space: nowrap;
`;
